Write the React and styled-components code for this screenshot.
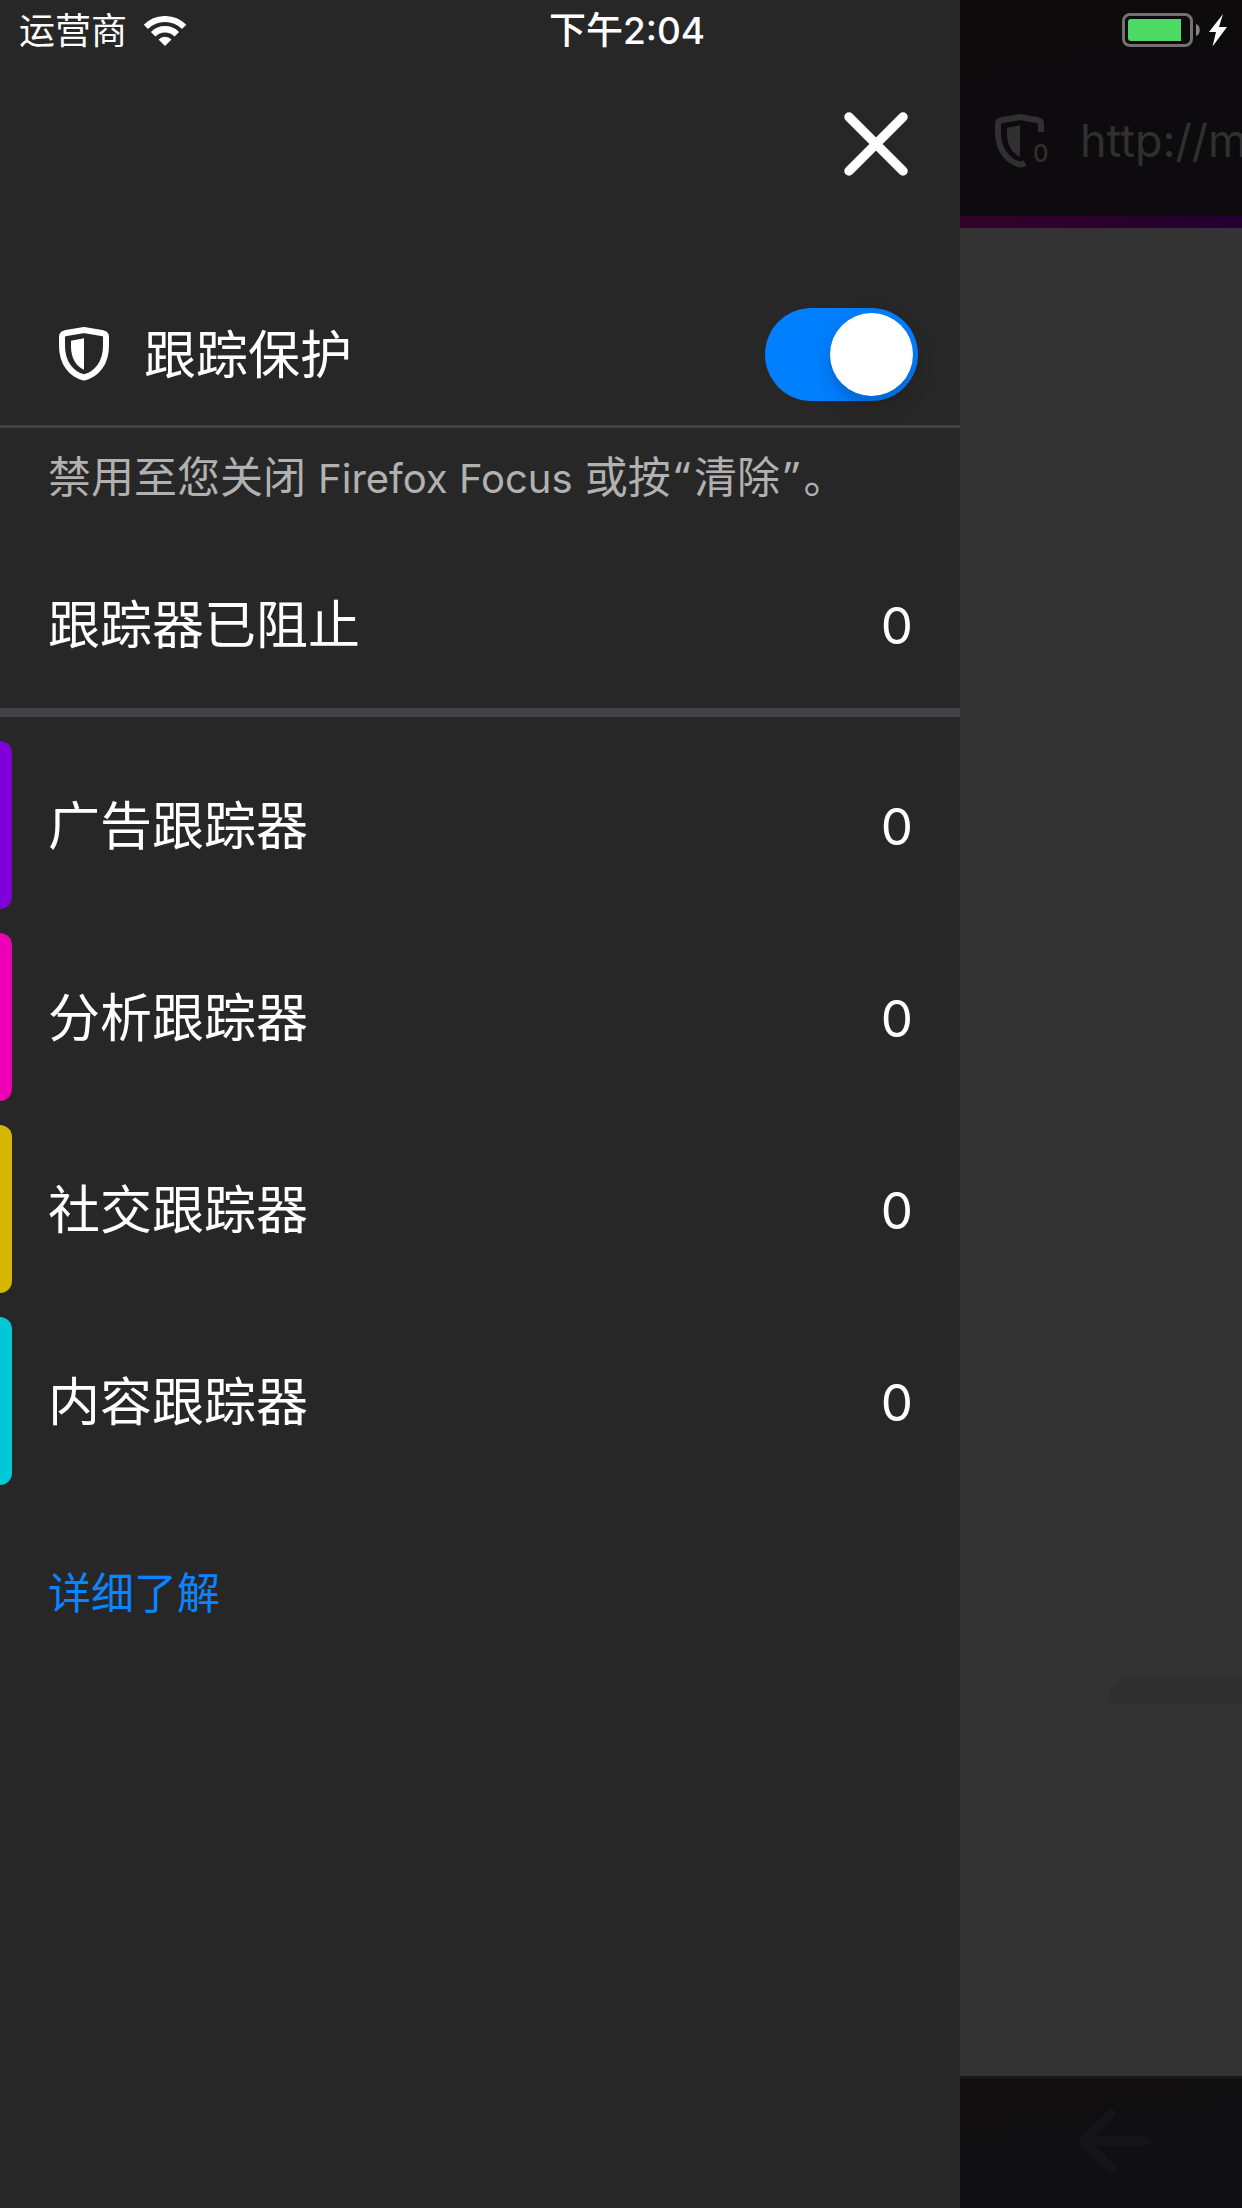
import React, { useState } from "react";
import styled, { createGlobalStyle } from "styled-components";

const GlobalStyle = createGlobalStyle`
  *, *::before, *::after { box-sizing: border-box; }
  body {
    margin: 0;
    background: #272727;
    color: #fff;
    font-family: Inter, "Noto Sans CJK SC", sans-serif;
  }
`;

const Screen = styled.div`
  position: relative;
  display: grid;
  grid-template-columns: 160fr 47fr;
  min-height: 100vh;
  overflow: hidden;
`;

/* Status bar, floating over the drawer and the page */

const StatusBar = styled.header`
  position: absolute;
  inset: 0 0 auto 0;
  z-index: 2;
  display: grid;
  grid-template-columns: 1fr auto 1fr;
  align-items: center;
  height: 60px;
  padding-left: 12px;
  font-size: 36px;
  line-height: 56px;
`;

const Carrier = styled.div`
  display: flex;
  align-items: center;
  gap: 17px;
  padding: 2px 0 0 7px;
`;

const Clock = styled.time`
  padding-top: 2px;
  font-size: 37px;
  font-weight: 500;
`;

const Power = styled.div`
  display: flex;
  justify-content: flex-end;
  padding-right: 15px;
`;

/* Drawer */

const Drawer = styled.aside`
  display: flex;
  flex-direction: column;
  min-width: 0;
  background: #272727;
`;

const DrawerHeader = styled.div`
  display: flex;
  justify-content: flex-end;
  padding: 100px 40px 95px;
`;

const IconButton = styled.button`
  display: flex;
  align-items: center;
  justify-content: center;
  width: 88px;
  height: 88px;
  padding: 0;
  border: 0;
  background: none;
  color: inherit;
`;

const ProtectionRow = styled.label`
  display: flex;
  align-items: center;
  height: 145px;
  padding: 0 42px 0 59px;
  border-bottom: 3px solid #414146;
  font-size: 52px;
  line-height: 72px;
`;

const ProtectionLabel = styled.span`
  flex: 1;
  margin-left: 35px;
  padding-top: 3px;
`;

const Toggle = styled.input`
  appearance: none;
  display: flex;
  align-items: center;
  width: 153px;
  height: 93px;
  margin: 0;
  padding: 5px;
  border-radius: 47px;
  background: ${(p) => (p.checked ? "#007fff" : "#5a5a5e")};

  &::before {
    content: "";
    width: 83px;
    height: 83px;
    margin-left: ${(p) => (p.checked ? "auto" : "0")};
    border-radius: 50%;
    background: #fff;
    box-shadow: 0 9px 24px rgba(0, 0, 0, 0.15), 0 9px 3px rgba(0, 0, 0, 0.06);
  }
`;

const Note = styled.p`
  margin: 0;
  padding: 19px 48px 34px;
  color: #b1b1b1;
  font-size: 43px;
  line-height: 60px;
`;

const Brand = styled.span`
  font-size: 40px;
  line-height: 1;
`;

const Quote = styled.span`
  padding: 0 4px;
  font-family: "Noto Sans", sans-serif;
  line-height: 1;
`;

const CountRow = styled.div`
  display: flex;
  align-items: center;
  justify-content: space-between;
  height: 168px;
  padding: 3px 47px 0 48px;
  font-size: 52px;
  line-height: 72px;
`;

const Count = styled.span`
  font-size: 51px;
`;

const Total = styled(CountRow)`
  height: 176px;
  border-bottom: 9px solid #414146;
`;

const Trackers = styled.ul`
  display: flex;
  flex-direction: column;
  gap: 24px;
  margin: 0;
  padding: 24px 0;
  list-style: none;
`;

const Tracker = styled(CountRow)`
  padding-left: 36px;
  flex: 1;
`;

const TrackerItem = styled.li`
  display: flex;

  &::before {
    content: "";
    width: 12px;
    border-radius: 0 12px 12px 0;
    background: ${(p) => p.$color};
  }
`;

const LearnMore = styled.a`
  align-self: flex-start;
  margin: 54px 48px;
  color: #0a84ff;
  font-size: 43px;
  line-height: 60px;
  text-decoration: none;
`;

/* Dimmed browser page */

const Page = styled.main`
  display: flex;
  flex-direction: column;
  min-width: 0;
  overflow: hidden;
  background: #333;
`;

const AddressBar = styled.div`
  display: flex;
  align-items: center;
  gap: 33px;
  height: 216px;
  padding: 66px 0 0 35px;
  background: linear-gradient(170deg, #0d0b0b, #0d0b0e 60%);
  color: #303030;
`;

const Url = styled.input`
  flex: 1;
  min-width: 0;
  height: 60px;
  padding: 0;
  border: 0;
  background: none;
  color: inherit;
  font: 45px/60px Inter, "Noto Sans CJK SC", sans-serif;
`;

const ShieldBadge = styled.div`
  display: flex;
  align-items: flex-end;
  width: 52px;
  height: 54px;
`;

const BadgeCount = styled.span`
  margin-left: -12px;
  font-size: 24px;
  font-weight: 500;
  line-height: 28px;
`;

const Progress = styled.div`
  height: 12px;
  background: linear-gradient(90deg, #330329, #220030);
`;

const Content = styled.div`
  display: flex;
  flex: 1;
  flex-direction: column;
  justify-content: flex-end;
  padding: 0 0 371px 149px;
`;

const Toast = styled.div`
  height: 27px;
  border-radius: 20px 0 0 0;
  background: #2f2f2f;
`;

const Toolbar = styled.nav`
  display: flex;
  justify-content: center;
  height: 132px;
  padding: 18px 0 0 28px;
  border-top: 3px solid #171918;
  background: linear-gradient(170deg, #100e0e, #100f11 50%);
  color: #151417;
`;

function WifiIcon() {
  return (
    <svg width="42" height="30" viewBox="0 0 42 30" fill="none" stroke="#fff" aria-hidden="true">
      <path d="M1.9 10.9a27 27 0 0 1 38.2 0" strokeWidth="6" />
      <path d="M9.2 18.2a16.7 16.7 0 0 1 23.6 0" strokeWidth="6.4" />
      <path d="M21 30l-6.5-6.5a9.2 9.2 0 0 1 13 0z" fill="#fff" stroke="none" />
    </svg>
  );
}

function BatteryIcon() {
  return (
    <svg width="105" height="34" viewBox="0 0 105 34" role="img" aria-label="正在充电">
      <rect x="1.5" y="1.5" width="68" height="31" rx="6.5" fill="none" stroke="#727071" strokeWidth="3" />
      <path d="M59 6v22H9a3 3 0 0 1-3-3V9a3 3 0 0 1 3-3z" fill="#4cd964" />
      <path d="M74 11c5 1 5 11 0 12z" fill="#858384" />
      <path d="M101 1L87 19h7l-3.500 14.500L105 14h-8z" fill="#fff" />
    </svg>
  );
}

function CloseIcon() {
  return (
    <svg width="64" height="64" viewBox="0 0 64 64" aria-hidden="true">
      <path d="M5 5l54 54M59 5L5 59" stroke="currentColor" strokeWidth="9.500" strokeLinecap="round" />
    </svg>
  );
}

const ShieldSvg = styled.svg`
  flex-shrink: 0;
`;

function ShieldIcon({ notched }) {
  return (
    <ShieldSvg width="50" height="54" viewBox="0 0 50 54" fill="none" aria-hidden="true">
      <path
        d={
          notched
            ? "M46 18V9.500q0-2.500-3-3.200L25 3 6 6.300Q3 7 3 9.500V19c0 16 9 28.500 22 31.500q2.500-.2 5-1.500"
            : "M25 3L6 6.300Q3 7 3 9.500V19c0 16.500 9 28.500 22 31.500 13-3 22-15 22-31.500V9.500Q47 7 44 6.300z"
        }
        stroke="currentColor"
        strokeWidth="6"
      />
      <path d="M25 11.300L12 13.700V20c0 10.500 5 19.500 13 22.700z" fill="currentColor" />
    </ShieldSvg>
  );
}

function BackIcon() {
  return (
    <svg width="74" height="64" viewBox="0 0 74 64" fill="none" aria-hidden="true">
      <path
        d="M33 4.500L5.500 32 33 59.500M5.500 32H69"
        stroke="currentColor"
        strokeWidth="9"
        strokeLinecap="round"
        strokeLinejoin="round"
      />
    </svg>
  );
}

const trackers = [
  { name: "广告跟踪器", count: 0, color: "#8000d7" },
  { name: "分析跟踪器", count: 0, color: "#ed00b5" },
  { name: "社交跟踪器", count: 0, color: "#d7b600" },
  { name: "内容跟踪器", count: 0, color: "#00c8d7" },
];

export default function App() {
  const [enabled, setEnabled] = useState(true);

  return (
    <Screen>
      <GlobalStyle />
      <StatusBar>
        <Carrier>
          运营商
          <WifiIcon />
        </Carrier>
        <Clock>下午2:04</Clock>
        <Power>
          <BatteryIcon />
        </Power>
      </StatusBar>

      <Drawer>
        <DrawerHeader>
          <IconButton type="button" aria-label="关闭">
            <CloseIcon />
          </IconButton>
        </DrawerHeader>
        <ProtectionRow>
          <ShieldIcon />
          <ProtectionLabel>跟踪保护</ProtectionLabel>
          <Toggle
            type="checkbox"
            role="switch"
            checked={enabled}
            onChange={(e) => setEnabled(e.target.checked)}
          />
        </ProtectionRow>
        <Note>
          禁用至您关闭 <Brand>Firefox Focus</Brand> 或按<Quote>“</Quote>清除<Quote>”</Quote>。
        </Note>
        <Total>
          <span>跟踪器已阻止</span>
          <Count>0</Count>
        </Total>
        <Trackers>
          {trackers.map((t) => (
            <TrackerItem key={t.name} $color={t.color}>
              <Tracker>
                <span>{t.name}</span>
                <Count>{t.count}</Count>
              </Tracker>
            </TrackerItem>
          ))}
        </Trackers>
        <LearnMore href="#learn-more">详细了解</LearnMore>
      </Drawer>

      <Page>
        <AddressBar>
          <ShieldBadge>
            <ShieldIcon notched />
            <BadgeCount>0</BadgeCount>
          </ShieldBadge>
          <Url type="text" aria-label="网址" readOnly value="http://m" />
        </AddressBar>
        <Progress />
        <Content>
          <Toast />
        </Content>
        <Toolbar>
          <IconButton type="button" aria-label="后退">
            <BackIcon />
          </IconButton>
        </Toolbar>
      </Page>
    </Screen>
  );
}
